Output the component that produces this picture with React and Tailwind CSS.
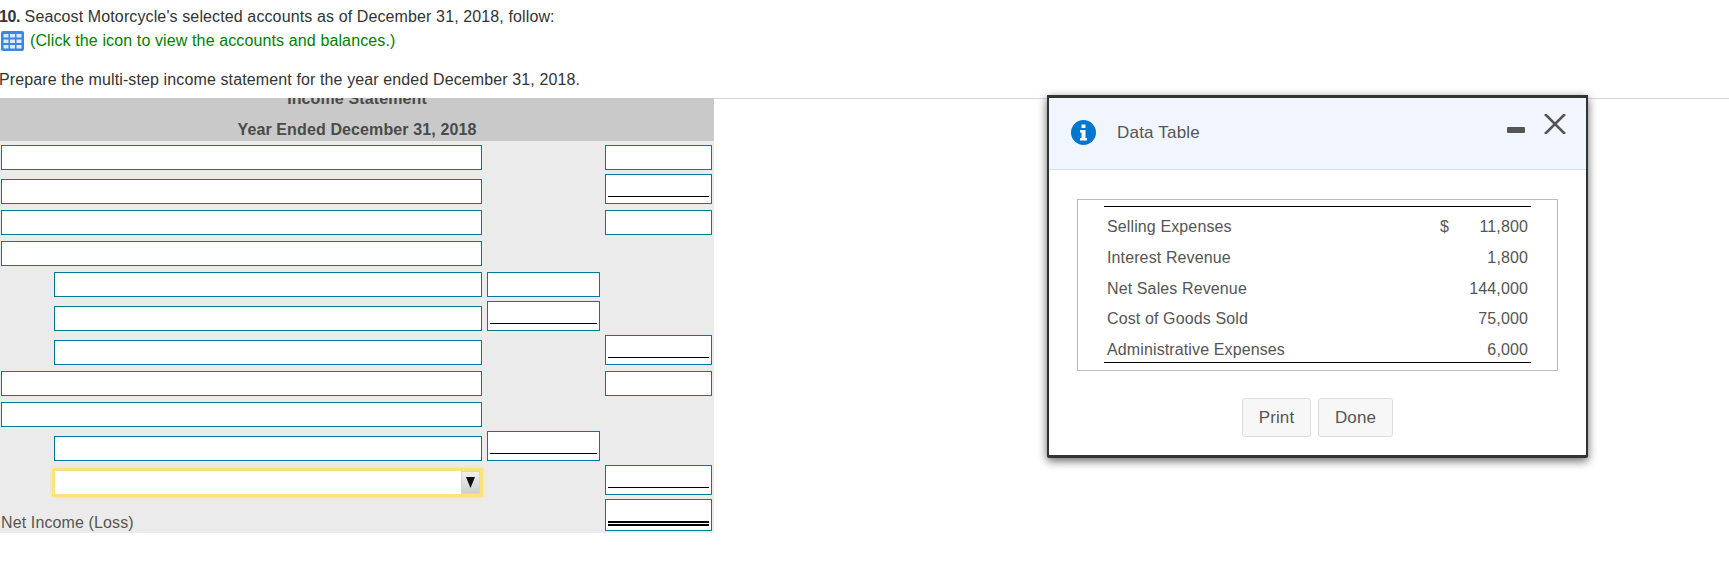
const GridIcon = () => (
  <svg width="23" height="20" viewBox="0 0 23 20" className="shrink-0">
    <rect width="23" height="20" rx="2" fill="#3d85e0" />
    {[3, 8.5, 14].map((y) =>
      [2.5, 9, 15.5].map((x) => <rect key={`${x}-${y}`} x={x} y={y} width="5" height="3.5" fill="#dbe9fb" />)
    )}
  </svg>
);

const InfoIcon = () => (
  <svg width="25" height="25" viewBox="0 0 25 25" className="shrink-0">
    <circle cx="12.5" cy="12.5" r="12.5" fill="#0077cc" />
    <path d="M10.5 4.5h4v3.5h-4zM9 10h5.5v8H16v2.5H9V18h1.5v-5.5H9z" fill="#fff" />
  </svg>
);

const Field = ({ line, double, tall, className = "" }) => (
  <div className={`flex flex-col justify-end border border-[#00799b] bg-white px-[2px] ${tall ? "h-[30px] pb-[6px]" : "h-[25px]"} ${double ? "h-[32px] pb-[4px]" : ""} ${className}`}>
    {line && <div className="border-b border-black" />}
    {double && <div className="border-b-[5px] border-double border-black" />}
  </div>
);

const Row = ({ indent, left, mid, right, gap }) => (
  <div className={`grid grid-cols-[482px_113px_107px] items-end gap-x-[5px] ${gap}`}>
    <div className={indent ? "pl-[54px]" : "pl-px"}>{left || <Field />}</div>
    <div>{mid}</div>
    <div>{right}</div>
  </div>
);

const Dropdown = () => (
  <div className="-mr-px -mb-[2px] -ml-[2px] flex h-[29px] justify-end border-[3px] border-[#ffe27a] bg-white shadow-[0_0_3px_#ffe27a]">
    <div className="flex w-[19px] items-center justify-center border border-[#d5d5d5] bg-gradient-to-b from-[#f0f0f0] to-[#cfcfcf]">
      <svg width="9" height="11" viewBox="0 0 9 11">
        <path d="M0 0h9L4.500 11z" fill="#111" />
      </svg>
    </div>
  </div>
);

const accounts = [
  { name: "Selling Expenses", amount: "11,800", sign: "$" },
  { name: "Interest Revenue", amount: "1,800" },
  { name: "Net Sales Revenue", amount: "144,000" },
  { name: "Cost of Goods Sold", amount: "75,000" },
  { name: "Administrative Expenses", amount: "6,000" },
];

const DataTableModal = () => (
  <div className="absolute left-[1047px] top-[95px] h-[363px] w-[541px] rounded-b-[2px] border-x-2 border-t-[3px] border-b-[3px] border-[#333] bg-white text-[#555] shadow-[0_3px_10px_rgba(0,0,0,0.6)]">
    <div className="flex h-[72px] border-b border-[#cfe4f5] bg-[#f1f6fe] pl-[22px] pr-[20px]">
      <div className="flex items-center gap-[21px] pb-[2px]">
        <InfoIcon />
        <span className="text-[17px] tracking-[0.2px]">Data Table</span>
      </div>
      <div className="ml-auto flex items-start gap-[19px]">
        <div className="mt-[29px] h-[6px] w-[18px] rounded-[1px] bg-[#555]" />
        <svg width="22" height="20" viewBox="0 0 22 20" className="mt-[16px]">
          <path d="M1 0l20 20M21 0L1 20" stroke="#555" strokeWidth="2.600" fill="none" />
        </svg>
      </div>
    </div>

    <div className="mx-[28px] mt-[29px] h-[172px] border border-[#bbb] px-[26px] pt-[6px]">
      <div className="border-y border-black pt-[5px]">
        {accounts.map((item, i) => (
          <div key={item.name} className={`grid grid-cols-[336px_20px_1fr] leading-[30px] ${i === accounts.length - 1 ? "h-[27px]" : "h-[30.75px]"}`}>
            <span className="pl-[3px]">{item.name}</span>
            <span>{item.sign}</span>
            <span className="pr-[3px] text-right">{item.amount}</span>
          </div>
        ))}
      </div>
    </div>

    <div className="mt-[27px] flex justify-center gap-[7px] text-[17px]">
      <button className="h-[39px] w-[69px] rounded-[3px] border border-[#ddd] bg-[#f7f7f7]">Print</button>
      <button className="h-[39px] w-[75px] rounded-[3px] border border-[#ddd] bg-[#f7f7f7]">Done</button>
    </div>
  </div>
);

export default function App() {
  return (
    <div className="relative min-h-[567px] overflow-hidden bg-white font-['Liberation_Sans',Arial,sans-serif] text-base tracking-[0.12px] text-[#333]">
      <div className="h-[98px] pt-[5px] leading-6">
        <p className="-ml-px">
          <b className="tracking-[-0.4px]">10.</b> Seacost Motorcycle's selected accounts as of December 31, 2018, follow:
        </p>
        <p className="flex items-center gap-[6px] pl-px text-[#008000]">
          <GridIcon />
          (Click the icon to view the accounts and balances.)
        </p>
        <p className="-ml-px mt-[15px]">Prepare the multi-step income statement for the year ended December 31, 2018.</p>
      </div>

      <div className="border-t border-[#d4d8e0]" />

      <div className="-mt-px w-[714px] bg-[#ebebeb] pb-[2px]">
        <div className="flex h-[43px] flex-col justify-end overflow-hidden bg-[#c9c9c9] text-center font-bold leading-6 text-[#4a4a4a]">
          <div className="mb-[7px] shrink-0">Income Statement</div>
          <div className="-mb-px shrink-0">Year Ended December 31, 2018</div>
        </div>

        <Row gap="mt-[4px]" right={<Field />} />
        <Row gap="mt-[4px]" right={<Field tall line />} />
        <Row gap="mt-[6px]" right={<Field />} />
        <Row gap="mt-[6px]" />
        <Row gap="mt-[6px]" indent mid={<Field />} />
        <Row gap="mt-[4px]" indent mid={<Field tall line />} />
        <Row gap="mt-[4px]" indent right={<Field tall line />} />
        <Row gap="mt-[6px]" right={<Field />} />
        <Row gap="mt-[6px]" />
        <Row gap="mt-[4px]" indent mid={<Field tall line />} />
        <Row gap="mt-[4px]" indent left={<Dropdown />} right={<Field tall line />} />
        <Row
          gap="mt-[4px]"
          left={<span className="block leading-4 text-[#555]">Net Income (Loss)</span>}
          right={<Field double />}
        />
      </div>

      <DataTableModal />
    </div>
  );
}
